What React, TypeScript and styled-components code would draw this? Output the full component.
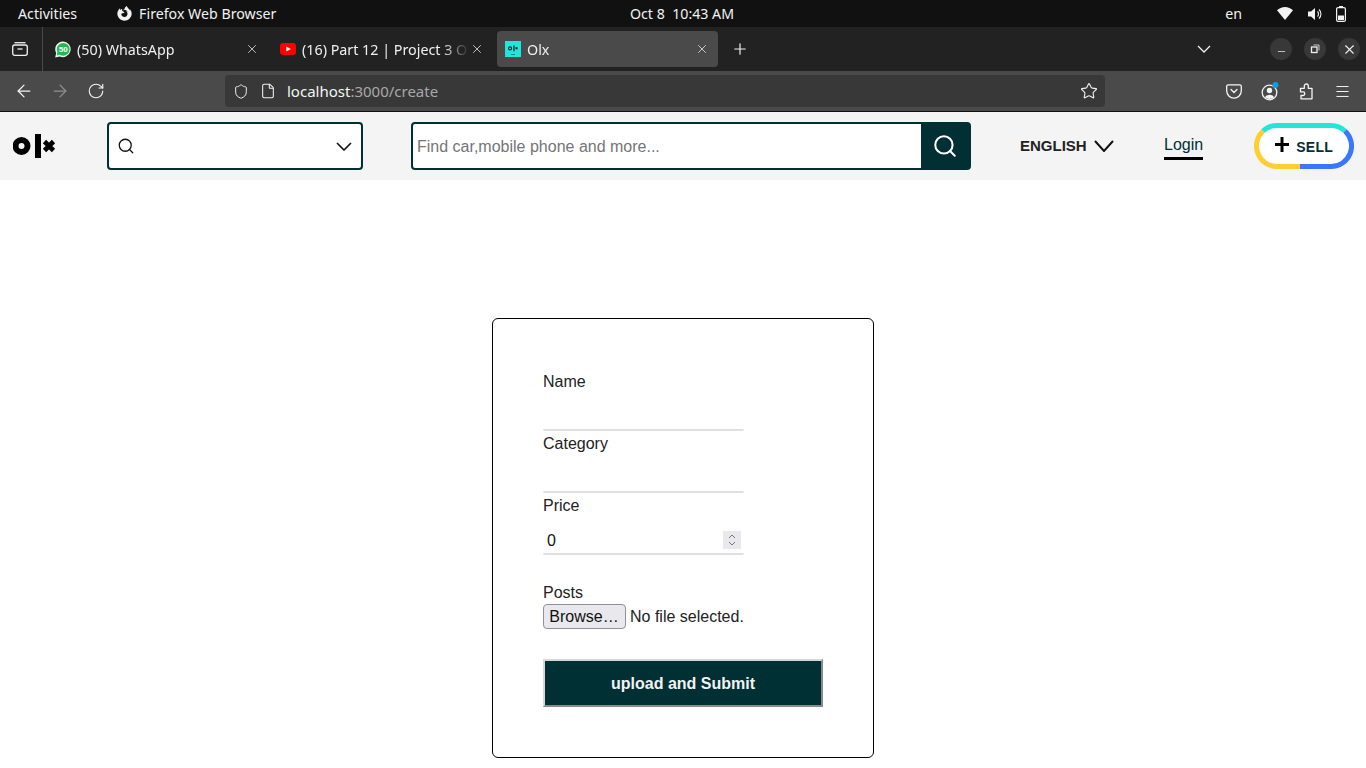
import { ArrowLeft, ArrowRight, File, Menu, Minus, Plus, RotateCw, Search, Shield, Star, X } from "lucide-react"
import { FaFirefoxBrowser } from "react-icons/fa"
import styled, { createGlobalStyle } from "styled-components"

const GlobalStyle = createGlobalStyle`
  html, body {
    margin: 0;
    padding: 0;
    background: #fff;
    overflow: hidden;
  }
  * { box-sizing: border-box; }
`

const uiFont = `"Noto Sans", "Open Sans", sans-serif`
const pageFont = `"Liberation Sans", Arial, sans-serif`

const Screen = styled.div`
  width: 1366px;
  height: 768px;
  overflow: hidden;
  display: flex;
  flex-direction: column;
  font-family: ${pageFont};
`

// gnome top bar
const TopBar = styled.div`
  height: 27px;
  flex: none;
  background: #111;
  color: #f2f2f2;
  font-family: ${uiFont};
  font-size: 14.2px;
  display: grid;
  grid-template-columns: 1fr auto 1fr;
  align-items: center;
  padding: 0 20px 0 18px;
`
const TopLeft = styled.div`
  display: flex;
  align-items: center;
`
const AppName = styled.span`
  display: flex;
  align-items: center;
  gap: 7px;
  margin-left: 40px;
`
const TopRight = styled.div`
  display: flex;
  align-items: center;
  justify-content: flex-end;
`
const Lang = styled.span`
  margin-right: 35px;
`
const StatusIcons = styled.div`
  display: flex;
  align-items: center;
  gap: 13.5px;
`

// firefox tabs
const TabStrip = styled.div`
  height: 44px;
  flex: none;
  background: #222;
  display: flex;
  align-items: center;
  font-family: ${uiFont};
  font-size: 14.3px;
  color: #f0f0f0;
`
const ListBtn = styled.div`
  width: 42px;
  height: 44px;
  flex: none;
  padding-right: 2px;
  display: flex;
  align-items: center;
  justify-content: center;
`
const Divider = styled.div`
  width: 1px;
  height: 44px;
  background: #4a4a4a;
  margin-right: 4px;
`
const Tab = styled.div<{ $active?: boolean }>`
  width: 221px;
  height: 36px;
  flex: none;
  margin-right: 4px;
  padding: 0 9px 0 8px;
  border-radius: 4px;
  background: ${p => (p.$active ? "#4a4a4a" : "transparent")};
  display: flex;
  align-items: center;
  gap: 6px;
`
const TabTitle = styled.span`
  flex: 1;
  margin-right: -5px;
  white-space: nowrap;
  overflow: hidden;
  -webkit-mask-image: linear-gradient(to right, #000 84%, transparent 100%);
  mask-image: linear-gradient(to right, #000 84%, transparent 100%);
`
const NewTab = styled.div`
  margin-left: 9px;
  display: flex;
  align-items: center;
`
const TabListArrow = styled.div`
  margin-left: auto;
  margin-right: 59px;
  display: flex;
`
const WindowBtns = styled.div`
  display: flex;
  gap: 12px;
  margin-right: 6px;
`
const WinBtn = styled.div<{ $low?: boolean }>`
  width: 22px;
  height: 22px;
  padding-top: ${p => (p.$low ? 4 : 0)}px;
  border-radius: 50%;
  background: #383838;
  display: flex;
  align-items: center;
  justify-content: center;
`

// firefox toolbar
const NavBar = styled.div`
  height: 41px;
  flex: none;
  background: #4a4a4a;
  border-bottom: 1px solid #111;
  padding: 0 6px;
  display: flex;
  align-items: center;
`
const NavBtn = styled.div`
  width: 36px;
  height: 32px;
  flex: none;
  display: flex;
  align-items: center;
  justify-content: center;
`
const UrlBar = styled.div`
  width: 880px;
  height: 32px;
  margin-left: 111px;
  background: #383838;
  border-radius: 4px;
  display: flex;
  align-items: center;
  padding: 0 7px 0 8px;
  font-family: ${uiFont};
  font-size: 15px;
  color: #f5f5f5;
`
const UrlIcon = styled.div`
  width: 16px;
  display: flex;
  justify-content: center;
  margin-right: 11px;
`
const UrlText = styled.span`
  flex: 1;
`
const UrlMuted = styled.span`
  color: #a8a8a8;
`
const NavRight = styled.div`
  margin-left: auto;
  display: flex;
`

// olx header
const Header = styled.header`
  height: 68px;
  flex: none;
  background: #f4f4f4;
  display: flex;
  align-items: center;
  padding-left: 13px;
`
const LogoWrap = styled.div`
  width: 43px;
  height: 24px;
  flex: none;
  margin-right: 51px;
  display: flex;
`
const PlaceSelect = styled.div`
  width: 256px;
  height: 48px;
  flex: none;
  background: #fff;
  border: 2px solid #002f34;
  border-radius: 4px;
  display: flex;
  align-items: center;
  justify-content: space-between;
  padding: 0 9px 0 8px;
  color: #111;
`
const SearchBox = styled.div`
  width: 560px;
  height: 48px;
  flex: none;
  margin-left: 48px;
  display: flex;
  background: #002f34;
  border: 2px solid #002f34;
  border-radius: 4px;
`
const SearchInput = styled.input`
  flex: 1;
  min-width: 0;
  border: 0;
  outline: 0;
  background: #fff;
  padding: 1px 4px 0;
  font-family: ${pageFont};
  font-size: 16px;
  border-radius: 2px 0 0 2px;
  &::placeholder {
    color: #757575;
    opacity: 1;
  }
`
const SearchBtn = styled.div`
  width: 48px;
  flex: none;
  display: flex;
  align-items: center;
  justify-content: center;
  color: #fff;
`
const Language = styled.div`
  margin-left: 49px;
  width: 144px;
  flex: none;
  padding-bottom: 1px;
  display: flex;
  align-items: center;
  gap: 7px;
  font-size: 15px;
  font-weight: 700;
  color: #222;
`
const LoginLink = styled.a`
  flex: none;
  font-size: 16px;
  color: #002f34;
  padding-bottom: 3px;
  border-bottom: 3px solid #000;
  margin-top: 3px;
`
const SellBtn = styled.div`
  position: relative;
  width: 100px;
  height: 46px;
  flex: none;
  margin-left: 51px;
  display: flex;
  align-items: center;
  padding-left: 20px;
  font-size: 14px;
  font-weight: 700;
  letter-spacing: 0.3px;
  color: #002f34;
`
const SellRing = styled.svg`
  position: absolute;
  top: 0;
  left: 0;
`
const SellContent = styled.span`
  position: relative;
  display: flex;
  align-items: center;
  gap: 6px;
`
const SellPlus = styled.svg`
  margin-top: -4px;
`
const SellText = styled.span`
  padding-top: 2px;
`

// create form
const Main = styled.main`
  flex: 1;
  background: #fff;
  display: flex;
  justify-content: center;
  padding-top: 138px;
`
const Card = styled.form`
  width: 382px;
  height: 440px;
  flex: none;
  border: 1px solid #000;
  border-radius: 6px;
  padding: 53px 50px 0;
  display: flex;
  flex-direction: column;
  font-size: 16px;
  color: #222;
`
const Label = styled.label<{ $gap?: number }>`
  display: block;
  height: 18px;
  line-height: 20px;
  margin-top: ${p => p.$gap ?? 0}px;
`
const TextField = styled.input`
  display: block;
  width: 201px;
  height: 41px;
  padding: 0 4px;
  border: 0;
  border-bottom: 2px solid #e0e0e0;
  border-radius: 0 0 2px 2px;
  outline: 0;
  background: transparent;
  font-family: ${pageFont};
  font-size: 16px;
  color: #111;
`
const NumberField = styled.div`
  width: 201px;
  height: 41px;
  display: flex;
  align-items: flex-end;
  justify-content: space-between;
  padding: 0 3px 2px 4px;
  border-bottom: 2px solid #e0e0e0;
  border-radius: 0 0 2px 2px;
  color: #111;
`
const NumberValue = styled.span`
  line-height: 20px;
`
const Spinner = styled.div`
  width: 18px;
  height: 18px;
  margin-bottom: 2px;
  background: #e9e9ed;
  display: flex;
  align-items: center;
  justify-content: center;
`
const FileRow = styled.div`
  display: flex;
  align-items: center;
  margin-top: 3px;
  height: 25px;
  width: 220px;
  white-space: nowrap;
`
const BrowseBtn = styled.button`
  width: 83px;
  height: 25px;
  padding: 0 1px 0 0;
  background: #e9e9ed;
  border: 1px solid #8f8f9d;
  border-radius: 4px;
  font-family: ${pageFont};
  font-size: 16px;
  color: #111;
  margin-right: 4px;
`
const SubmitBtn = styled.button`
  width: 280px;
  height: 48px;
  margin-top: 30px;
  padding: 2px 0 0;
  background: #002f34;
  border: 2px solid;
  border-color: #d8d8d8 #8a8a8a #8a8a8a #d8d8d8;
  font-family: ${pageFont};
  font-size: 16px;
  font-weight: 700;
  color: #f2f2f2;
`

function OlxLogo() {
  return (
    <svg width="43" height="24" viewBox="0 0 43 24">
      <circle cx="8.500" cy="12" r="6" fill="none" stroke="#000" strokeWidth="6" />
      <rect x="22" y="0" width="6" height="24" fill="#000" />
      <path d="M31.500 7.500l9 9M40.500 7.500l-9 9" stroke="#000" strokeWidth="4.600" />
    </svg>
  )
}

function Chevron({ w, h, sw = 1.6, color = "currentColor" }: { w: number; h: number; sw?: number; color?: string }) {
  return (
    <svg width={w} height={h} viewBox={`0 0 ${w} ${h}`} fill="none" stroke={color} strokeWidth={sw}>
      <path d={`M1 1L${w / 2} ${h - 1}L${w - 1} 1`} />
    </svg>
  )
}

function WhatsIcon() {
  return (
    <svg width="16" height="17" viewBox="0 0 16 17">
      <path d="M8 .5a7.800 7.800 0 0 0-6.800 11.600L.2 16.500l4.400-1.100A7.800 7.800 0 1 0 8 .5z" fill="#f4f4f4" />
      <circle cx="8.200" cy="8.300" r="6.400" fill="#1fb954" />
      <path d="M2.500 11l-.8 3.400 3.400-.9z" fill="#1fb954" />
      <text x="8.200" y="11" fontSize="8" fontWeight="700" textAnchor="middle" fill="#fff" fontFamily="Liberation Sans">50</text>
    </svg>
  )
}

function YoutubeIcon() {
  return (
    <svg width="16" height="12" viewBox="0 0 16 12">
      <rect width="16" height="12" rx="3" fill="#f00" />
      <path d="M6.300 3.400v5.200L10.800 6z" fill="#fff" />
    </svg>
  )
}

function OlxFavicon() {
  return (
    <svg width="16" height="16" viewBox="0 0 16 16">
      <rect width="16" height="16" fill="#23e5db" />
      <g transform="translate(3 4.500) scale(.24)">
        <circle cx="8.500" cy="12" r="6.300" fill="none" stroke="#002f34" strokeWidth="5" />
        <rect x="22" y="0" width="5.500" height="24" fill="#002f34" />
        <rect x="31" y="7" width="9" height="9" fill="#002f34" />
      </g>
      <rect x="6" y="13" width="4" height="1" fill="#002f34" opacity=".6" />
    </svg>
  )
}

export default function App() {
  return (
    <Screen>
      <GlobalStyle />
      <TopBar>
        <TopLeft>
          Activities
          <AppName>
            <FaFirefoxBrowser size={15} color="#f2f2f2" />
            Firefox Web Browser
          </AppName>
        </TopLeft>
        <span>Oct 8&nbsp;&nbsp;10:43 AM</span>
        <TopRight>
          <Lang>en</Lang>
          <StatusIcons>
            <svg width="16" height="13" viewBox="0 0 16 13">
              <path d="M0 3.200C2 1.300 5 0 8 0s6 1.300 8 3.200L8 13z" fill="#f2f2f2" />
            </svg>
            <svg width="16" height="16" viewBox="0 0 16 16" fill="none" stroke="#f2f2f2">
              <path d="M1 5.500h3L8 2v12L4 10.500H1z" fill="#f2f2f2" stroke="none" />
              <path d="M10.500 5.500a3.500 3.500 0 0 1 0 5M12 3.500a6.200 6.200 0 0 1 0 9" strokeWidth="1.100" />
            </svg>
            <svg width="10" height="16" viewBox="0 0 10 16" fill="none">
              <rect x="3" y="0" width="4" height="2" fill="#f2f2f2" />
              <rect x=".6" y="1.600" width="8.800" height="13.800" rx="1.500" stroke="#f2f2f2" strokeWidth="1.200" />
              <rect x="2" y="9.500" width="6" height="4.500" fill="#f2f2f2" />
            </svg>
          </StatusIcons>
        </TopRight>
      </TopBar>

      <TabStrip>
        <ListBtn>
          <svg width="16" height="14" viewBox="0 0 16 14" fill="none" stroke="#f0f0f0" strokeWidth="1.300">
            <path d="M2.500.7h11" />
            <rect x=".7" y="3" width="14.600" height="10.300" rx="2" />
            <path d="M5.500 7h5" />
          </svg>
        </ListBtn>
        <Divider />
        <Tab>
          <WhatsIcon />
          <TabTitle>(50) WhatsApp</TabTitle>
          <X size={14} strokeWidth={1.300} />
        </Tab>
        <Tab>
          <YoutubeIcon />
          <TabTitle>(16) Part 12 | Project 3 OLX</TabTitle>
          <X size={14} strokeWidth={1.300} />
        </Tab>
        <Tab $active>
          <OlxFavicon />
          <TabTitle>Olx</TabTitle>
          <X size={14} strokeWidth={1.300} />
        </Tab>
        <NewTab>
          <Plus size={18} strokeWidth={1.600} />
        </NewTab>
        <TabListArrow>
          <Chevron w={14} h={8} sw={1.300} />
        </TabListArrow>
        <WindowBtns>
          <WinBtn $low><Minus size={11} strokeWidth={1.600} /></WinBtn>
          <WinBtn>
            <svg width="10" height="10" viewBox="0 0 10 10" fill="none" stroke="#f0f0f0">
              <rect x="1.500" y="3" width="5.500" height="5.500" strokeWidth="1.300" />
              <path d="M3.500 1h5.500v5.500" strokeWidth=".8" />
            </svg>
          </WinBtn>
          <WinBtn><X size={15} strokeWidth={1.800} /></WinBtn>
        </WindowBtns>
      </TabStrip>

      <NavBar>
        <NavBtn><ArrowLeft size={20} strokeWidth={1.500} color="#f5f5f5" /></NavBtn>
        <NavBtn><ArrowRight size={20} strokeWidth={1.500} color="#8f8f8f" /></NavBtn>
        <NavBtn><RotateCw size={18} strokeWidth={1.500} color="#f5f5f5" /></NavBtn>
        <UrlBar>
          <UrlIcon><Shield size={19} strokeWidth={1.500} color="#f0f0f0" /></UrlIcon>
          <UrlIcon><File size={16} strokeWidth={1.600} color="#f0f0f0" /></UrlIcon>
          <UrlText>localhost<UrlMuted>:3000/create</UrlMuted></UrlText>
          <Star size={18} strokeWidth={1.500} color="#f0f0f0" />
        </UrlBar>
        <NavRight>
          <NavBtn>
            <svg width="16" height="15" viewBox="0 0 16 15" fill="none" stroke="#f5f5f5" strokeWidth="1.300">
              <path d="M2.200.8h11.600c.8 0 1.500.7 1.500 1.500v4.500a7.300 7.300 0 0 1-14.600 0V2.300C.7 1.500 1.400.8 2.200.8z" />
              <path d="M5 5.500l3 3 3-3" strokeLinecap="round" />
            </svg>
          </NavBtn>
          <NavBtn>
            <svg width="18" height="19" viewBox="0 0 18 19" fill="none">
              <circle cx="8.500" cy="10.500" r="7.300" stroke="#f5f5f5" strokeWidth="1.300" />
              <circle cx="8.500" cy="8.500" r="2.700" fill="#f5f5f5" />
              <path d="M3.800 15.200a5 3.800 0 0 1 9.400 0 7.300 7.300 0 0 1-9.400 0z" fill="#f5f5f5" />
              <circle cx="14.500" cy="3" r="3" fill="#0a9fe8" />
            </svg>
          </NavBtn>
          <NavBtn>
            <svg width="16" height="17" viewBox="0 0 16 17" fill="none" stroke="#f5f5f5" strokeWidth="1.300" strokeLinejoin="round">
              <path d="M3 15.800V12.500H5a1.800 1.800 0 0 0 0-3.600H2.500V5.300H6.300V3a2 2 0 0 1 4 0V5.300H14V15.800z" />
            </svg>
          </NavBtn>
          <NavBtn><Menu size={17} strokeWidth={1.400} color="#f5f5f5" /></NavBtn>
        </NavRight>
      </NavBar>

      <Header>
        <LogoWrap><OlxLogo /></LogoWrap>
        <PlaceSelect>
          <Search size={18} strokeWidth={1.700} />
          <Chevron w={16} h={9} sw={1.600} />
        </PlaceSelect>
        <SearchBox>
          <SearchInput placeholder="Find car,mobile phone and more..." />
          <SearchBtn><Search size={26} strokeWidth={1.900} /></SearchBtn>
        </SearchBox>
        <Language>
          ENGLISH
          <Chevron w={20} h={12} sw={2} color="#111" />
        </Language>
        <LoginLink>Login</LoginLink>
        <SellBtn>
          <SellRing width="100" height="46" viewBox="0 0 100 46" fill="#fff" strokeWidth="5">
            <rect x="2.500" y="2.500" width="95" height="41" rx="20.500" stroke="none" />
            <path d="M46 43.500H23A20.500 20.500 0 0 1 9 8" fill="none" stroke="#ffce32" />
            <path d="M9 8A20.500 20.500 0 0 1 23 2.500H77A20.500 20.500 0 0 1 91 8" fill="none" stroke="#23e5db" />
            <path d="M91 8A20.500 20.500 0 0 1 77 43.500H46" fill="none" stroke="#3a77ff" />
          </SellRing>
          <SellContent>
            <SellPlus width="16" height="15" viewBox="0 0 16 15" fill="#000">
              <rect x="6.500" y="0" width="3" height="15" />
              <rect x="1" y="6" width="14" height="3" />
            </SellPlus>
            <SellText>SELL</SellText>
          </SellContent>
        </SellBtn>
      </Header>

      <Main>
        <Card onSubmit={e => e.preventDefault()}>
          <Label htmlFor="name">Name</Label>
          <TextField id="name" type="text" />
          <Label htmlFor="category" $gap={3}>Category</Label>
          <TextField id="category" type="text" />
          <Label $gap={3}>Price</Label>
          <NumberField>
            <NumberValue>0</NumberValue>
            <Spinner>
              <svg width="10" height="14" viewBox="0 0 10 14" fill="none" stroke="#777" strokeWidth="1">
                <path d="M2 5l3-3 3 3M2 9l3 3 3-3" />
              </svg>
            </Spinner>
          </NumberField>
          <Label $gap={28}>Posts</Label>
          <FileRow>
            <BrowseBtn type="button">Browse…</BrowseBtn>
            No file selected.
          </FileRow>
          <SubmitBtn type="submit">upload and Submit</SubmitBtn>
        </Card>
      </Main>
    </Screen>
  )
}
